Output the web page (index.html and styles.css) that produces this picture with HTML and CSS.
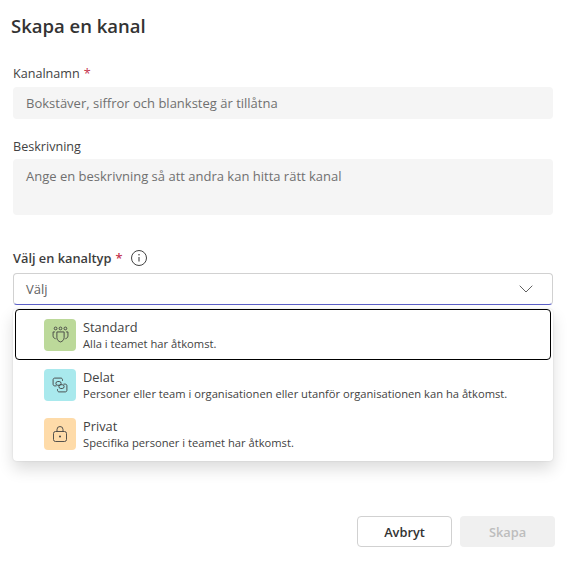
FILE: index.html
```html
<!DOCTYPE html>
<html lang="sv">
<head>
<meta charset="utf-8">
<title>Skapa en kanal</title>
<link rel="stylesheet" href="styles.css">
</head>
<body>
<main class="dialog">
  <h1 class="title">Skapa en kanal</h1>
  <div class="field field-name">
    <label class="label">Kanalnamn <span class="req">*</span></label>
    <div class="input">Bokstäver, siffror och blanksteg är tillåtna</div>
  </div>
  <div class="field field-desc">
    <label class="label">Beskrivning</label>
    <div class="input textarea">Ange en beskrivning så att andra kan hitta rätt kanal</div>
  </div>
  <div class="field field-type">
    <label class="label label-strong">Välj en kanaltyp <span class="req">*</span>
      <svg class="info" viewBox="0 0 16 16" width="16" height="16" fill="none" stroke="#424242"><circle cx="8" cy="8" r="7.5"/><path d="M8 7v4.6" stroke-width="1.1"/><circle cx="8" cy="4.8" r=".8" fill="#424242" stroke="none"/></svg>
    </label>
    <div class="select-wrap">
      <div class="select">
        <span>Välj</span>
        <svg viewBox="0 0 14 8" width="14" height="8" fill="none" stroke="#616161" stroke-width="1"><path d="M.7.7 7 7l6.3-6.3"/></svg>
      </div>
      <ul class="menu">
        <li class="option active">
          <span class="tile green">
            <svg viewBox="0 0 16 16" width="17" height="17" fill="none" stroke="#424242" stroke-width=".85"><circle cx="3.400" cy="2.300" r="1.300"/><circle cx="8" cy="2.300" r="1.300"/><circle cx="12.600" cy="2.300" r="1.300"/><path d="M4.600 5.600h6.800v5.400c0 2-1.500 3.500-3.400 4-1.900-.5-3.400-2-3.400-4z"/><path d="M2.800 5.600H1v3.600c0 1.500 1 2.500 2.400 2.800M13.200 5.600H15v3.600c0 1.500-1 2.500-2.400 2.800"/></svg>
          </span>
          <span class="text"><span class="name">Standard</span><span class="sub">Alla i teamet har åtkomst.</span></span>
        </li>
        <li class="option">
          <span class="tile cyan">
            <svg viewBox="0 0 16 16" width="16" height="16" fill="none" stroke="#424242" stroke-width=".9"><path d="M10.500 3.800V2.700c0-.9-.7-1.600-1.600-1.600H2.700c-.9 0-1.600.7-1.600 1.600v4.600c0 .9.7 1.600 1.600 1.600h1.800"/><path d="M5.500 12.200v1.100c0 .9.7 1.600 1.600 1.600h6.200c.9 0 1.600-.7 1.600-1.600V8.700c0-.9-.7-1.600-1.600-1.600h-1.800"/><rect x="3.900" y="4.500" width="5.200" height="3.800" rx="1.900"/><rect x="6.900" y="7.700" width="5.200" height="3.800" rx="1.900"/></svg>
          </span>
          <span class="text"><span class="name">Delat</span><span class="sub">Personer eller team i organisationen eller utanför organisationen kan ha åtkomst.</span></span>
        </li>
        <li class="option">
          <span class="tile orange">
            <svg viewBox="0 0 16 16" width="16" height="16" fill="none" stroke="#424242" stroke-width=".9"><rect x="1.500" y="5.500" width="13" height="10" rx="2"/><path d="M5 5.500V3.500a3 3 0 0 1 6 0v2"/><circle cx="8" cy="10.500" r="1" fill="#424242" stroke="none"/></svg>
          </span>
          <span class="text"><span class="name">Privat</span><span class="sub">Specifika personer i teamet har åtkomst.</span></span>
        </li>
      </ul>
    </div>
  </div>
  <footer class="actions">
    <button class="btn btn-cancel" type="button">Avbryt</button>
    <button class="btn btn-create" type="button" disabled>Skapa</button>
  </footer>
</main>
</body>
</html>
```
FILE: styles.css
```css
* { box-sizing: border-box; }
html, body { margin: 0; padding: 0; background: #fff; }
body { width: 570px; height: 566px; overflow: hidden; font-family: "Open Sans", "Noto Sans", sans-serif; color: #242424; }
.dialog { display: flex; flex-direction: column; height: 566px; padding: 0 17px 19px 13px; }
.title { margin: 13px 0 0 -2px; font-size: 18.5px; line-height: 26px; font-weight: 600; color: #333; }
.field { display: flex; flex-direction: column; margin-right: -1px; width: 540px; }
.field-name { margin-top: 25px; }
.field-desc { margin-top: 18px; }
.field-type { margin-top: 33px; }
.label { font-size: 12.6px; line-height: 20px; height: 20px; margin-bottom: 3px; color: #424242; display: flex; align-items: center; gap: 4px; }
.field-desc .label { margin-bottom: 2px; }
.label-strong { font-weight: 600; font-size: 12.8px; margin-bottom: 5px; color: #3d3d3d; }
.req { color: #c4314b; }
.info { margin-left: 5px; }
.input { height: 32px; background: #f5f5f5; border-radius: 4px; padding: 0 13px; font-size: 13px; line-height: 32px; color: #707070; }
.textarea { height: 56px; line-height: 20px; padding-top: 7px; }
.select-wrap { position: relative; }
.select { height: 32px; border: 1px solid #d1d1d1; border-bottom: 1px solid #5b5fc7; border-radius: 4px; padding: 0 19px 0 12px; display: flex; align-items: center; justify-content: space-between; font-size: 13px; color: #616161; }
.menu { position: absolute; top: 36px; left: 0; width: 540px; margin: 0; padding: 0 0 2px; list-style: none; background: #fff; border-radius: 4px; box-shadow: 0 8px 16px rgba(0,0,0,.14), 0 0 2px rgba(0,0,0,.12); }
.option { height: 49.500px; margin: 0 2px; padding-left: 29px; display: flex; align-items: center; gap: 7px; }
.option.active { height: 51px; border: 1px solid #000; border-radius: 4px; padding-left: 28px; }
.tile { width: 32px; height: 32px; border-radius: 4px; display: flex; align-items: center; justify-content: center; flex: none; }
.green { background: #bcd99a; }
.cyan { background: #a9e9ed; }
.orange { background: #fedba9; }
.text { display: flex; flex-direction: column; }
.name { font-size: 12.8px; line-height: 18px; color: #424242; }
.sub { font-size: 11.18px; line-height: 16px; color: #424242; }
.actions { margin-top: auto; display: flex; justify-content: flex-end; gap: 8px; margin-right: -2px; }
.btn { width: 95px; height: 31px; border-radius: 4px; font: 600 12.800px "Open Sans", sans-serif; }
.btn-cancel { background: #fff; border: 1px solid #d1d1d1; color: #333; }
.btn-create { background: #f0f0f0; border: none; color: #bdbdbd; }
```
